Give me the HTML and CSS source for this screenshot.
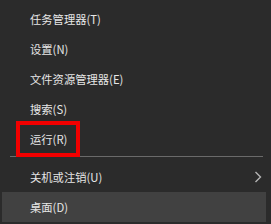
FILE: index.html
```html
<!DOCTYPE html>
<html lang="zh-CN">
<head>
<meta charset="utf-8">
<link rel="stylesheet" href="styles.css">
</head>
<body>
<div class="menu">
  <div class="item">任务管理器(T)</div>
  <div class="item">设置(N)</div>
  <div class="item">文件资源管理器(E)</div>
  <div class="item">搜索(S)</div>
  <div class="item run">运行(R)<span class="mark"></span></div>
  <div class="sep"></div>
  <div class="item sub">关机或注销(U)
    <svg class="chev" width="8" height="12" viewBox="0 0 8 12"><polyline points="1.5,1 6.5,6 1.5,11" fill="none" stroke="#b4b4b4" stroke-width="1.4"/></svg>
  </div>
  <div class="item hl">桌面(D)</div>
</div>
</body>
</html>
```
FILE: styles.css
```css
html, body {
  margin: 0;
  padding: 0;
  background: #2b2b2b;
  width: 271px;
  height: 224px;
  overflow: hidden;
}
.menu {
  display: flex;
  flex-direction: column;
  padding-top: 4px;
  font-family: "Noto Sans CJK SC", "Noto Sans", sans-serif;
  font-size: 11.3px;
  color: #e6e6e6;
}
.item {
  height: 30px;
  display: flex;
  align-items: center;
  padding-left: 30px;
  position: relative;
  box-sizing: border-box;
}
.mark {
  position: absolute;
  left: 16px;
  top: -3px;
  width: 64px;
  height: 36px;
  box-sizing: border-box;
  border: 4px solid #f20000;
}
.sep {
  height: 1px;
  background: #6a6a6a;
  margin: 2px 8px 5px 10px;
}
.sub {
  justify-content: space-between;
  padding-right: 9px;
}
.chev {
  display: block;
}
.hl {
  background: #414141;
  margin-left: 2px;
  margin-right: 5px;
  padding-left: 28px;
}
```
